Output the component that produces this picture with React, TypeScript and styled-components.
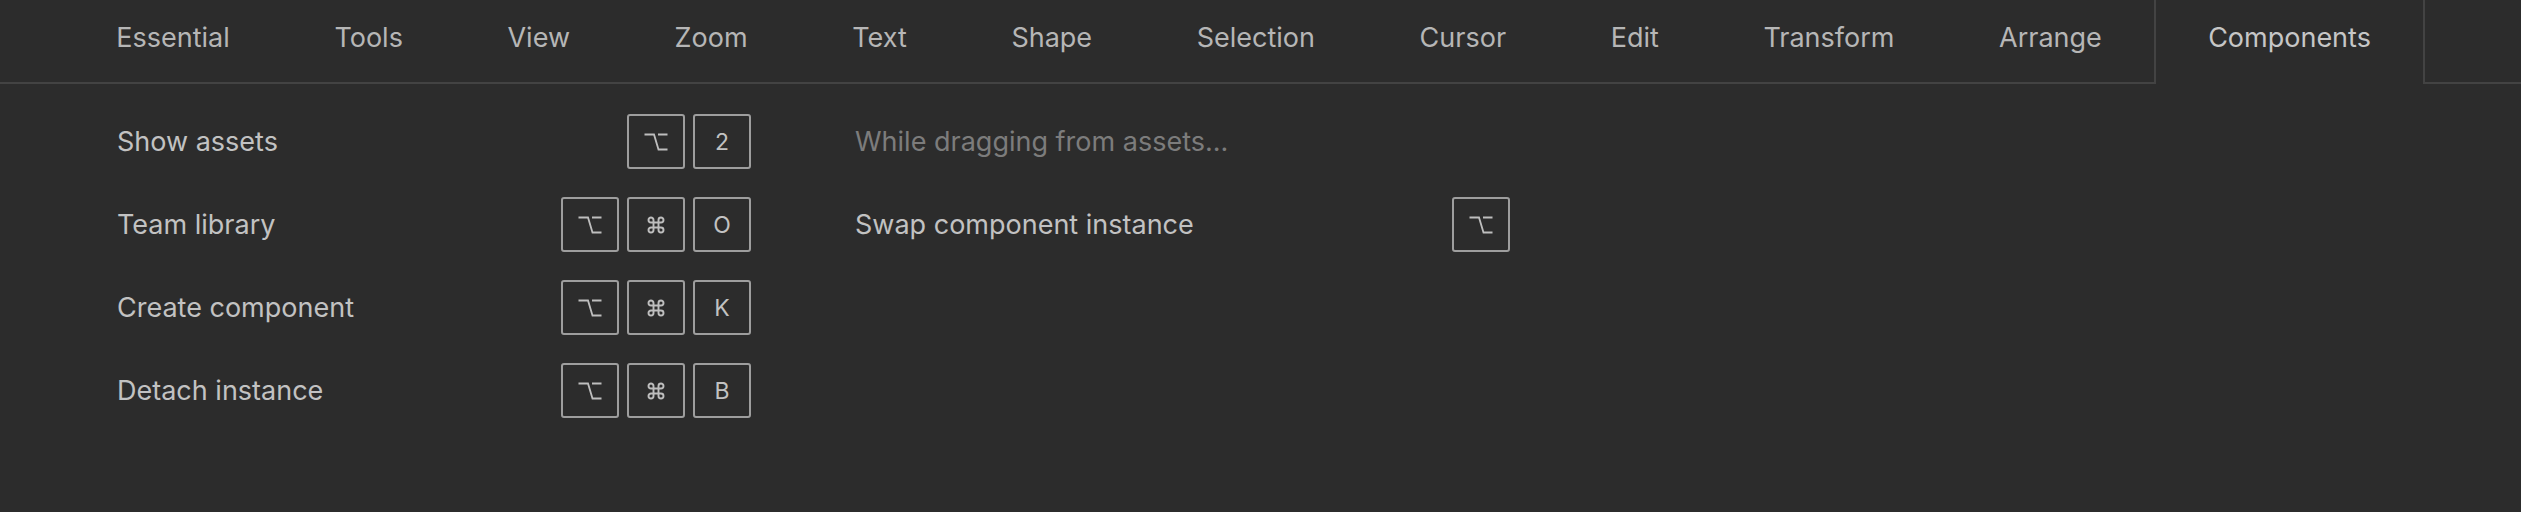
import React from 'react';
import styled, { createGlobalStyle } from 'styled-components';

const GlobalStyle = createGlobalStyle`
  html, body {
    margin: 0;
    padding: 0;
    background: #2c2c2c;
  }
  body {
    font-family: Inter, "Noto Sans", sans-serif;
  }
`;

const Panel = styled.main`
  width: 100%;
  height: 512px;
  background: #2c2c2c;
  color: #c4c4c4;
  overflow: hidden;
`;

const TabBar = styled.nav`
  display: flex;
  height: 82px;
  padding-left: 64px;
  border-bottom: 2px solid #434343;
`;

const Tab = styled.div<{ $active?: boolean }>`
  display: flex;
  align-items: center;
  height: 84px;
  margin-bottom: -2px;
  padding: 0 ${(p) => (p.$active ? 52 : 50.3)}px 9px;
  box-sizing: border-box;
  border-left: 2px solid ${(p) => (p.$active ? '#434343' : 'transparent')};
  border-right: 2px solid ${(p) => (p.$active ? '#434343' : 'transparent')};
  background: ${(p) => (p.$active ? '#2c2c2c' : 'transparent')};
  font-size: 27px;
  color: ${(p) => (p.$active ? '#c6c6c6' : '#b6b6b6')};
  white-space: nowrap;
`;

const Content = styled.section`
  display: flex;
  gap: 104px;
  padding: 30px 0 0 117px;
`;

const Column = styled.div<{ $width: number }>`
  display: flex;
  flex-direction: column;
  gap: 28px;
  width: ${(p) => p.$width}px;
`;

const Row = styled.div`
  display: flex;
  align-items: center;
  justify-content: space-between;
  height: 55px;
`;

const Label = styled.span<{ $muted?: boolean }>`
  font-size: 27px;
  color: ${(p) => (p.$muted ? '#7c7c7c' : '#c2c2c2')};
  white-space: nowrap;
`;

const Keys = styled.div`
  display: flex;
  gap: 8px;
`;

const Key = styled.kbd`
  display: flex;
  align-items: center;
  justify-content: center;
  width: 58px;
  height: 55px;
  box-sizing: border-box;
  border: 2px solid #9e9e9e;
  border-radius: 3px;
  font-family: Inter, "Noto Sans", sans-serif;
  font-size: 23px;
  color: #c2c2c2;
`;

const OptionGlyph = () => (
  <svg width="24" height="18" viewBox="0 0 24 18" fill="none">
    <path
      d="M0.5 1.5H10L14.5 16.5H23.5M14 1.5H23.5"
      stroke="#bebebe"
      strokeWidth="1.8"
    />
  </svg>
);

const CommandGlyph = () => (
  <svg width="20" height="20" viewBox="0 0 24 24" fill="none">
    <path
      d="M15 6v12a3 3 0 1 0 3-3H6a3 3 0 1 0 3 3V6a3 3 0 1 0-3 3h12a3 3 0 1 0-3-3"
      stroke="#bebebe"
      strokeWidth="2.3"
    />
  </svg>
);

type KeyName = 'opt' | 'cmd' | string;

const renderKey = (k: KeyName, i: number) => (
  <Key key={i}>
    {k === 'opt' ? <OptionGlyph /> : k === 'cmd' ? <CommandGlyph /> : k}
  </Key>
);

const tabs = [
  'Essential',
  'Tools',
  'View',
  'Zoom',
  'Text',
  'Shape',
  'Selection',
  'Cursor',
  'Edit',
  'Transform',
  'Arrange',
  'Components',
];

const leftShortcuts: { label: string; keys: KeyName[] }[] = [
  { label: 'Show assets', keys: ['opt', '2'] },
  { label: 'Team library', keys: ['opt', 'cmd', 'O'] },
  { label: 'Create component', keys: ['opt', 'cmd', 'K'] },
  { label: 'Detach instance', keys: ['opt', 'cmd', 'B'] },
];

export default function App() {
  return (
    <>
      <GlobalStyle />
      <Panel>
        <TabBar>
          {tabs.map((t) => (
            <Tab key={t} $active={t === 'Components'}>
              {t}
            </Tab>
          ))}
        </TabBar>
        <Content>
          <Column $width={634}>
            {leftShortcuts.map((s) => (
              <Row key={s.label}>
                <Label>{s.label}</Label>
                <Keys>{s.keys.map(renderKey)}</Keys>
              </Row>
            ))}
          </Column>
          <Column $width={655}>
            <Row>
              <Label $muted>While dragging from assets...</Label>
            </Row>
            <Row>
              <Label>Swap component instance</Label>
              <Keys>{['opt'].map(renderKey)}</Keys>
            </Row>
          </Column>
        </Content>
      </Panel>
    </>
  );
}
